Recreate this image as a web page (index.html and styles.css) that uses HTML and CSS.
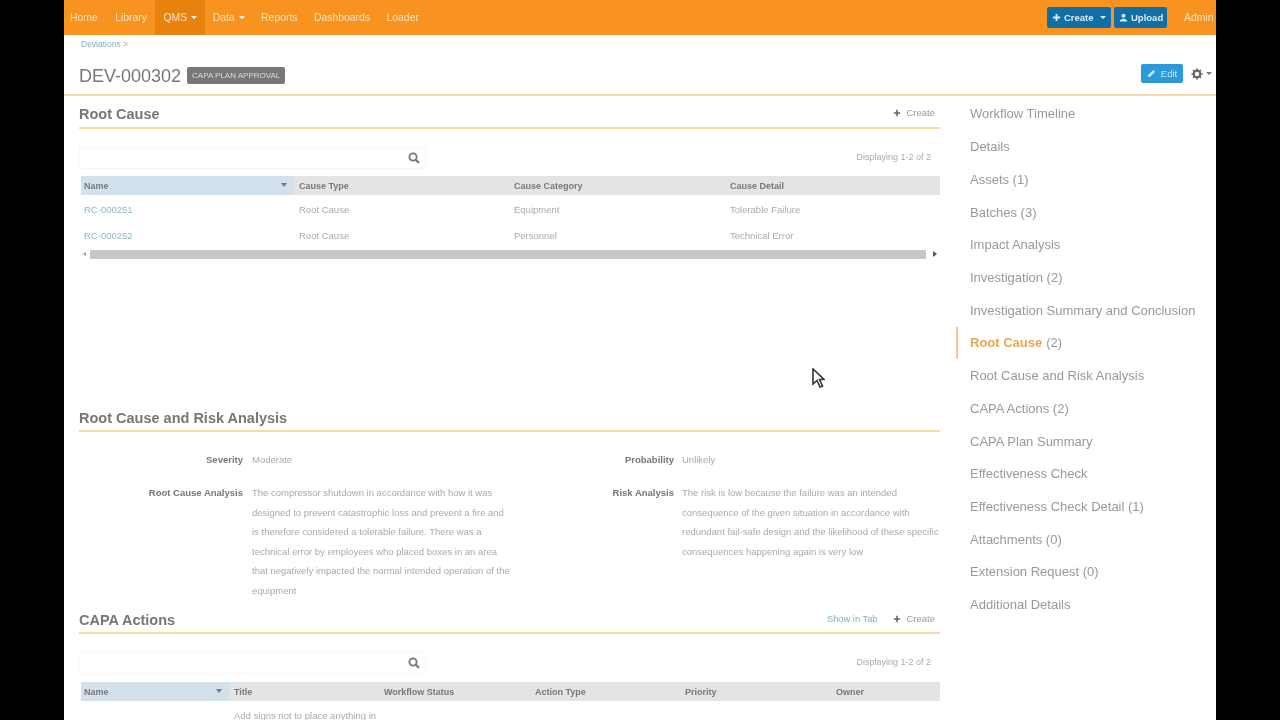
FILE: index.html
```html
<!DOCTYPE html>
<html lang="en">
	<head>
		<meta charset="UTF-8" />
		<title>DEV-000302</title>
		<link rel="stylesheet" href="styles.css">
	</head>
	<body>
		<div class="app">
			<nav class="topbar">
				<a class="nav-item">Home</a>
				<a class="nav-item">Library</a>
				<a class="nav-item active">QMS <i class="caret"></i></a>
				<a class="nav-item">Data <i class="caret"></i></a>
				<a class="nav-item">Reports</a>
				<a class="nav-item">Dashboards</a>
				<a class="nav-item">Loader</a>
				<div class="topbar-right">
					<button class="top-btn create-btn">
						<svg class="ic" viewBox="0 0 10 10"><path d="M4 1h2v3h3v2H6v3H4V6H1V4h3z" fill="currentColor"/></svg>
						Create <i class="caret caret-btn"></i>
					</button>
					<button class="top-btn upload-btn">
						<svg class="ic" viewBox="0 0 10 10"><circle cx="5" cy="3" r="2.2" fill="currentColor"/><path d="M1 9.5V8l3-1.5h2L9 8v1.5z" fill="currentColor"/></svg>
						Upload
					</button>
					<a class="admin">Admin</a>
				</div>
			</nav>

			<div class="page-head">
				<div class="breadcrumb"><span class="link">Deviations</span> &gt;</div>
				<div class="title-row">
					<h1>DEV-000302</h1>
					<span class="badge">CAPA PLAN APPROVAL</span>
					<button class="edit-btn">
						<svg class="ic" viewBox="0 0 10 10"><path d="M1 9l.5-2.5L7 1l2 2-5.500 5.500z" fill="currentColor"/></svg>
						Edit
					</button>
					<span class="gear">
						<svg class="gear-ic" viewBox="0 0 12 12"><circle cx="6" cy="6" r="3.300" fill="none" stroke="currentColor" stroke-width="2.200"/><path d="M6 .5v2M6 9.500v2M.5 6h2M9.500 6h2M2.100 2.100l1.400 1.400M8.500 8.500l1.400 1.400M2.100 9.900l1.400-1.400M8.500 3.500l1.400-1.400" stroke="currentColor" stroke-width="1.600"/></svg>
						<i class="caret caret-dark"></i>
					</span>
				</div>
			</div>

			<div class="columns">
				<main class="main">
					<section class="block block-cause">
						<div class="block-head">
							<h2>Root Cause</h2>
							<a class="create-link"><svg class="ic-sm" viewBox="0 0 10 10"><path d="M4 1h2v3h3v2H6v3H4V6H1V4h3z" fill="currentColor"/></svg> Create</a>
						</div>
						<div class="tools">
							<div class="search">
								<svg class="search-ic" viewBox="0 0 12 12"><circle cx="5" cy="5" r="3.600" fill="none" stroke="currentColor" stroke-width="1.800"/><path d="M7.800 7.800L11 11" stroke="currentColor" stroke-width="2.200"/></svg>
							</div>
							<span class="count">Displaying 1-2 of 2</span>
						</div>
						<div class="grid grid-cause">
							<div class="th sorted">Name <i class="sort"></i></div>
							<div class="th">Cause Type</div>
							<div class="th">Cause Category</div>
							<div class="th">Cause Detail</div>
							<div class="td link">RC-000251</div>
							<div class="td">Root Cause</div>
							<div class="td">Equipment</div>
							<div class="td">Tolerable Failure</div>
							<div class="td link">RC-000252</div>
							<div class="td">Root Cause</div>
							<div class="td">Personnel</div>
							<div class="td">Technical Error</div>
						</div>
						<div class="scroller">
							<i class="arrow-left"></i>
							<div class="thumb"></div>
							<i class="arrow-right"></i>
						</div>
					</section>

					<section class="block block-risk">
						<div class="block-head">
							<h2>Root Cause and Risk Analysis</h2>
						</div>
						<div class="fields">
							<div class="field-col field-col-left">
								<div class="field field-short">
									<label>Severity</label>
									<div class="value">Moderate</div>
								</div>
								<div class="field">
									<label>Root Cause Analysis</label>
									<div class="value">The compressor shutdown in accordance with how it was designed to prevent catastrophic loss and prevent a fire and is therefore considered a tolerable failure. There was a technical error by employees who placed boxes in an area that negatively impacted the normal intended operation of the equipment</div>
								</div>
							</div>
							<div class="field-col field-col-right">
								<div class="field field-short">
									<label>Probability</label>
									<div class="value">Unlikely</div>
								</div>
								<div class="field">
									<label>Risk Analysis</label>
									<div class="value">The risk is low because the failure was an intended consequence of the given situation in accordance with redundant fail-safe design and the likelihood of these specific consequences happening again is very low</div>
								</div>
							</div>
						</div>
					</section>

					<section class="block block-capa">
						<div class="block-head">
							<h2>CAPA Actions</h2>
							<a class="tab-link link">Show in Tab</a>
							<a class="create-link"><svg class="ic-sm" viewBox="0 0 10 10"><path d="M4 1h2v3h3v2H6v3H4V6H1V4h3z" fill="currentColor"/></svg> Create</a>
						</div>
						<div class="tools">
							<div class="search">
								<svg class="search-ic" viewBox="0 0 12 12"><circle cx="5" cy="5" r="3.600" fill="none" stroke="currentColor" stroke-width="1.800"/><path d="M7.800 7.800L11 11" stroke="currentColor" stroke-width="2.200"/></svg>
							</div>
							<span class="count">Displaying 1-2 of 2</span>
						</div>
						<div class="grid grid-capa">
							<div class="th sorted">Name <i class="sort"></i></div>
							<div class="th">Title</div>
							<div class="th">Workflow Status</div>
							<div class="th">Action Type</div>
							<div class="th">Priority</div>
							<div class="th">Owner</div>
							<div class="td"></div>
							<div class="td">Add signs not to place anything in</div>
						</div>
					</section>
				</main>

				<aside class="sidebar">
					<a class="side-item">Workflow Timeline</a>
					<a class="side-item">Details</a>
					<a class="side-item">Assets (1)</a>
					<a class="side-item">Batches (3)</a>
					<a class="side-item">Impact Analysis</a>
					<a class="side-item">Investigation (2)</a>
					<a class="side-item">Investigation Summary and Conclusion</a>
					<a class="side-item current"><b>Root Cause</b> (2)</a>
					<a class="side-item">Root Cause and Risk Analysis</a>
					<a class="side-item">CAPA Actions (2)</a>
					<a class="side-item">CAPA Plan Summary</a>
					<a class="side-item">Effectiveness Check</a>
					<a class="side-item">Effectiveness Check Detail (1)</a>
					<a class="side-item">Attachments (0)</a>
					<a class="side-item">Extension Request (0)</a>
					<a class="side-item">Additional Details</a>
				</aside>
			</div>

			<svg class="cursor" viewBox="0 0 14 22"><path d="M2 1v15l4-3.500 3 6.500 2.500-1-3-6.500H13z" fill="#fff" stroke="#333" stroke-width="1.600"/></svg>
		</div>
	</body>
</html>
```

FILE: styles.css
```css
* {
	box-sizing: border-box;
}
body {
	margin: 0;
	overflow: hidden;
	background-color: #000;
	font-family: "Liberation Sans", Arial, sans-serif;
	color: #888;
}
.app {
	position: relative;
	width: 1152px;
	height: 720px;
	margin: 0 auto;
	overflow: hidden;
	background-color: #fff;
	filter: blur(0.6px);
}
.link {
	color: #7fb0c8;
}
.caret {
	display: inline-block;
	width: 0;
	height: 0;
	margin-left: 1px;
	vertical-align: 2px;
	border-left: 3px solid transparent;
	border-right: 3px solid transparent;
	border-top: 3px solid #fff;
}

/* top bar */
.topbar {
	display: flex;
	align-items: stretch;
	height: 35px;
	background-color: #f7931e;
	font-size: 10.4px;
	color: #fde3c2;
}
.nav-item {
	display: flex;
	align-items: center;
	gap: 3px;
	padding: 0 8.5px 0 8px;
}
.nav-item:first-child {
	padding: 0 9.5px 0 6px;
}
.nav-item.active {
	padding-right: 7.5px;
	background-color: #e8820f;
}
.topbar-right {
	display: flex;
	align-items: center;
	gap: 3px;
	margin-left: auto;
}
.top-btn {
	display: flex;
	align-items: center;
	gap: 3px;
	height: 21px;
	padding: 0 5px;
	border: none;
	border-radius: 2px;
	background-color: #106fa6;
	color: #dcecf5;
	font: bold 9.5px "Liberation Sans", Arial, sans-serif;
}
.create-btn {
	width: 64px;
}
.upload-btn {
	width: 53px;
}
.caret-btn {
	margin-left: 3px;
	border-top-color: #dcecf5;
}
.ic {
	width: 9px;
	height: 9px;
	flex: none;
}
.admin {
	margin-left: 14px;
	width: 32px;
	white-space: nowrap;
	overflow: hidden;
}

/* page head */
.page-head {
	height: 61px;
	border-bottom: 2px solid #f6d7a6;
	padding-left: 15px;
}
.breadcrumb {
	padding: 4px 0 0 2px;
	font-size: 8.5px;
	line-height: 11px;
	color: #aaa;
}
.title-row {
	display: flex;
	align-items: center;
	height: 24px;
	margin-top: 14px;
}
h1 {
	margin: 0;
	font-size: 18px;
	font-weight: normal;
	color: #777;
}
.badge {
	margin: 0 0 1px 6px;
	padding: 0 5px;
	height: 17px;
	line-height: 17px;
	border-radius: 2px;
	background-color: #777;
	color: #ddd;
	font-size: 8px;
}
.edit-btn {
	display: flex;
	align-items: center;
	justify-content: center;
	align-self: flex-start;
	gap: 5px;
	width: 42px;
	height: 19px;
	margin-left: auto;
	border: none;
	border-radius: 2px;
	background-color: #2a9bd8;
	color: #cfe8f5;
	font: 9.5px "Liberation Sans", Arial, sans-serif;
}
.gear {
	display: flex;
	align-items: center;
	align-self: flex-start;
	gap: 2px;
	width: 33px;
	height: 19px;
	padding-left: 8px;
	color: #666;
}
.gear-ic {
	width: 12px;
	height: 12px;
}
.caret-dark {
	border-top-color: #777;
}

/* columns */
.columns {
	display: grid;
	grid-template-columns: 892px 1fr;
}
.main {
	padding: 0 16px 0 15px;
}
.block-head {
	display: flex;
	align-items: center;
	justify-content: flex-end;
	height: 31px;
	padding-top: 2px;
	border-bottom: 2px solid #f8d9a8;
}
h2 {
	margin: 0 auto 0 0;
	font-size: 14.5px;
	font-weight: bold;
	color: #777;
}
.block-cause {
	height: 306px;
	padding-top: 2px;
}
.block-risk {
	height: 202px;
}
.block-risk .block-head,
.block-capa .block-head {
	height: 30px;
	padding-top: 3px;
}
.create-link {
	display: flex;
	align-items: center;
	gap: 5px;
	height: 19px;
	margin-top: -2px;
	padding: 0 5px;
	font-size: 9.5px;
	color: #999;
}
.ic-sm {
	width: 8px;
	height: 8px;
	color: #666;
}
.tab-link {
	margin: -2px 11px 0 0;
	font-size: 9.3px;
}
.tools {
	display: flex;
	align-items: center;
	justify-content: space-between;
	height: 22px;
	margin-top: 18px;
}
.search {
	display: flex;
	align-items: center;
	justify-content: flex-end;
	width: 347px;
	height: 22px;
	padding: 0 5px 1px 0;
	border: 1px solid #f8f8f8;
	color: #777;
}
.search-ic {
	width: 12px;
	height: 12px;
}
.count {
	margin-bottom: 3px;
	padding-right: 9px;
	font-size: 9px;
	color: #aaa;
}

/* tables */
.grid {
	display: grid;
	margin: 7px 0 0 2px;
	font-size: 9.5px;
}
.grid-cause {
	grid-template-columns: 213px 215px 216px 1fr;
	grid-auto-rows: 19px 28px 24px;
}
.grid-capa {
	margin-top: 8px;
	grid-template-columns: 148px 150px 151px 150px 151px 1fr;
	grid-auto-rows: 19px 28px;
}
.th {
	position: relative;
	display: flex;
	align-items: center;
	padding-left: 5px;
	background-color: #e4e4e4;
	color: #777;
	font-weight: bold;
	font-size: 9px;
}
.th.sorted {
	padding-left: 3px;
	background-color: #d2e1ec;
}
.sort {
	position: absolute;
	top: 7px;
	right: 7px;
	border-left: 3px solid transparent;
	border-right: 3px solid transparent;
	border-top: 4px solid #778;
}
.td {
	display: flex;
	align-items: center;
	padding-left: 5px;
	color: #aaa;
}
.td.link {
	padding-left: 3px;
	color: #8db6cc;
}
.scroller {
	display: flex;
	align-items: center;
	gap: 4px;
	height: 10px;
	margin: 2px 0 0 4px;
}
.thumb {
	flex: 1;
	height: 9px;
	background-color: #c8c8c8;
}
.arrow-left {
	border-top: 2px solid transparent;
	border-bottom: 2px solid transparent;
	border-right: 3px solid #999;
}
.arrow-right {
	margin: 0 3px 0 3px;
	border-top: 3px solid transparent;
	border-bottom: 3px solid transparent;
	border-left: 4px solid #555;
}

/* fields */
.fields {
	display: grid;
	grid-template-columns: 430px 1fr;
	padding-top: 18px;
	font-size: 9.5px;
	line-height: 19.5px;
}
.field {
	display: grid;
	gap: 9px;
}
.field-col-left .field {
	grid-template-columns: 164px 260px;
}
.field-col-right .field {
	grid-template-columns: 165px 1fr;
	gap: 8px;
}
.field-short {
	margin-bottom: 13.5px;
}
.field label {
	text-align: right;
	font-weight: bold;
	color: #777;
}
.value {
	color: #aaa;
}

/* sidebar */
.sidebar {
	display: flex;
	flex-direction: column;
	padding-top: 1.5px;
}
.side-item {
	display: flex;
	align-items: center;
	gap: 4px;
	height: 32.73px;
	padding-left: 14px;
	font-size: 13px;
	color: #999;
}
.side-item.current {
	border-left: 2px solid #f8c98a;
	padding-left: 12px;
}
.side-item b {
	color: #eea64e;
}
.cursor {
	position: absolute;
	left: 747px;
	top: 368px;
	width: 14px;
	height: 22px;
}
```
